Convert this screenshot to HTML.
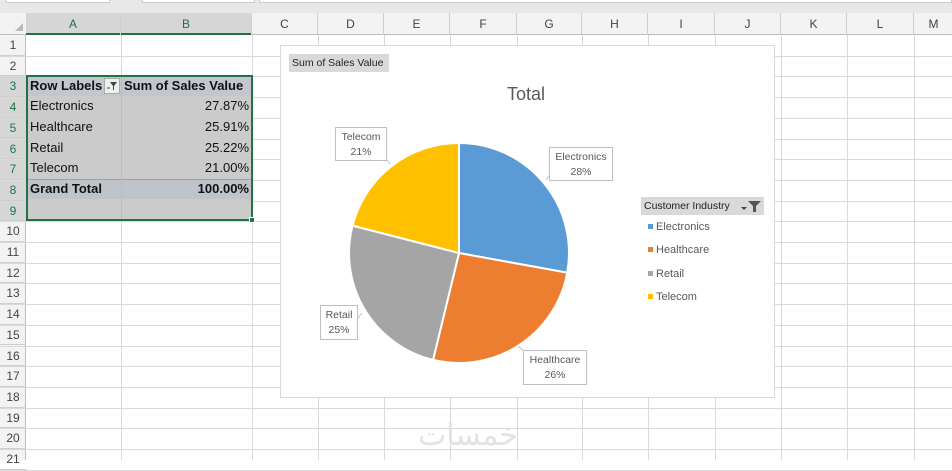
<!DOCTYPE html>
<html><head><style>
*{margin:0;padding:0;box-sizing:border-box}
body{width:952px;height:460px;overflow:hidden;background:#fff;font-family:"Liberation Sans",sans-serif;position:relative}
.a{position:absolute}
.hl{position:absolute;left:0;width:952px;height:1px;background:#d9d9d9}
.vl{position:absolute;top:35px;height:425px;width:1px;background:#d9d9d9}
.ch{position:absolute;top:13px;height:22px;font-size:12px;color:#444;text-align:center;line-height:22px;border-right:1px solid #cfcfcf}
.rh{position:absolute;left:0;width:26px;font-size:12px;color:#444;text-align:center;border-bottom:1px solid #cfcfcf}
.pt{position:absolute;font-size:13px;color:#111;line-height:20px}
.lbl{position:absolute;background:#fff;border:1px solid #bfbfbf;font-size:10.5px;color:#595959;text-align:center;line-height:15px;padding-top:2px}
.lg{position:absolute;left:648px;font-size:11px;color:#595959;line-height:14px}
.lg i{display:inline-block;width:5px;height:5px;margin-right:3px;vertical-align:1px}
</style></head><body>
<div class="a" style="left:0;top:0;width:952px;height:13px;background:#e8e8e8"></div>
<div class="a" style="left:5px;top:0;width:105px;height:3px;background:#fff;border:1px solid #ccc;border-top:0"></div>
<div class="a" style="left:142px;top:0;width:113px;height:3px;background:#fff;border:1px solid #ccc;border-top:0"></div>
<div class="a" style="left:259px;top:0;width:693px;height:3px;background:#fff;border:1px solid #ccc;border-top:0"></div>
<div class="a" style="left:0;top:13px;width:952px;height:22px;background:#f3f3f3;border-bottom:1px solid #bdbdbd"></div>
<div class="a" style="left:0;top:35px;width:26px;height:425px;background:#f3f3f3;border-right:1px solid #bdbdbd"></div>
<div class="a" style="left:26px;top:13px;width:226px;height:22px;background:#d6d6d6;border-bottom:2px solid #217346"></div>
<div class="a" style="left:0;top:76px;width:26px;height:145px;background:#d6d6d6"></div>
<svg class="a" style="left:14px;top:22px" width="10" height="10"><path d="M9 1L9 9L1 9Z" fill="#bbb"/></svg>

<div class="ch" style="left:26px;width:95px;color:#217346">A</div>
<div class="ch" style="left:121px;width:131px;color:#217346">B</div>
<div class="ch" style="left:252px;width:66px">C</div>
<div class="ch" style="left:318px;width:66px">D</div>
<div class="ch" style="left:384px;width:66px">E</div>
<div class="ch" style="left:450px;width:67px">F</div>
<div class="ch" style="left:517px;width:65px">G</div>
<div class="ch" style="left:582px;width:66px">H</div>
<div class="ch" style="left:648px;width:67px">I</div>
<div class="ch" style="left:715px;width:66px">J</div>
<div class="ch" style="left:781px;width:66px">K</div>
<div class="ch" style="left:847px;width:67px">L</div>
<div class="ch" style="left:914px;width:40px">M</div>

<div class="vl" style="left:121px"></div><div class="vl" style="left:252px"></div>
<div class="vl" style="left:318px"></div><div class="vl" style="left:384px"></div>
<div class="vl" style="left:450px"></div><div class="vl" style="left:517px"></div>
<div class="vl" style="left:582px"></div><div class="vl" style="left:648px"></div>
<div class="vl" style="left:715px"></div><div class="vl" style="left:781px"></div>
<div class="vl" style="left:847px"></div><div class="vl" style="left:914px"></div>

<div id="rows"></div>
<script>
var h='';for(var i=1;i<=21;i++){var t=35+(i-1)*20.7;h+='<div class="hl" style="top:'+(t+20.7).toFixed(1)+'px"></div><div class="rh" style="top:'+t.toFixed(1)+'px;height:20.7px;line-height:20.7px;'+((i>=3&&i<=9)?'color:#217346':'')+'">'+i+'</div>';}
document.getElementById('rows').innerHTML=h;
</script>

<!-- pivot table -->
<div class="a" style="left:27px;top:76px;width:225px;height:144px;background:#cbcbcb"></div>
<div class="a" style="left:27px;top:76px;width:225px;height:20px;background:#c3c7cd"></div>
<div class="a" style="left:27px;top:179px;width:225px;height:20px;background:#bfc4cb;border-top:1px solid #95a3b3"></div>
<div class="a" style="left:121px;top:76px;width:1px;height:144px;background:#bdbdbd"></div>
<div class="pt" style="left:30px;top:76px;font-weight:bold">Row Labels</div>
<div class="a" style="left:104px;top:78px;width:16px;height:16px;background:#eee;border:1px solid #aaa"></div>
<svg class="a" style="left:106px;top:80px" width="12" height="12"><path d="M4 2H11L8 6V10L7 10V6Z" fill="#444"/><path d="M1 8H4" stroke="#444"/></svg>
<div class="pt" style="left:124px;top:76px;font-weight:bold">Sum of Sales Value</div>
<div class="pt" style="left:30px;top:96px">Electronics</div><div class="pt" style="right:703px;top:96px">27.87%</div>
<div class="pt" style="left:30px;top:117px">Healthcare</div><div class="pt" style="right:703px;top:117px">25.91%</div>
<div class="pt" style="left:30px;top:138px">Retail</div><div class="pt" style="right:703px;top:138px">25.22%</div>
<div class="pt" style="left:30px;top:158px">Telecom</div><div class="pt" style="right:703px;top:158px">21.00%</div>
<div class="pt" style="left:30px;top:179px;font-weight:bold">Grand Total</div><div class="pt" style="right:703px;top:179px;font-weight:bold">100.00%</div>
<div class="a" style="left:26px;top:75px;width:227px;height:146px;border:2px solid #217346"></div>
<div class="a" style="left:249px;top:217px;width:6px;height:6px;background:#217346;border:1px solid #fff"></div>

<!-- chart -->
<div class="a" style="left:280px;top:45px;width:495px;height:353px;background:#fff;border:1px solid #d9d9d9"></div>
<div class="a" style="left:289px;top:54px;width:100px;height:18px;background:#d9d9d9;font-size:10.5px;line-height:18px;padding-left:3px;color:#222">Sum of Sales Value</div>
<div class="a" style="left:490px;top:84px;width:72px;text-align:center;font-size:18px;color:#595959">Total</div>
<svg class="a" style="left:0;top:0" width="952" height="460">
<path d="M459 253L459 143A110 110 0 0 1 567.2 272.7Z" fill="#5B9BD5" stroke="#fff" stroke-width="2"/>
<path d="M459 253L567.2 272.7A110 110 0 0 1 433.1 359.9Z" fill="#ED7D31" stroke="#fff" stroke-width="2"/>
<path d="M459 253L433.1 359.9A110 110 0 0 1 352.5 225.6Z" fill="#A5A5A5" stroke="#fff" stroke-width="2"/>
<path d="M459 253L352.5 225.6A110 110 0 0 1 459 143Z" fill="#FFC000" stroke="#fff" stroke-width="2"/>
<path d="M387 160L390 164M549 176L546 180M358 318L362 313M523 350L518 346" stroke="#bfbfbf"/>
</svg>
<div class="lbl" style="left:335px;top:127px;width:52px;height:34px">Telecom<br>21%</div>
<div class="lbl" style="left:549px;top:147px;width:64px;height:34px">Electronics<br>28%</div>
<div class="lbl" style="left:320px;top:305px;width:38px;height:35px">Retail<br>25%</div>
<div class="lbl" style="left:523px;top:350px;width:64px;height:35px">Healthcare<br>26%</div>

<div class="a" style="left:641px;top:197px;width:123px;height:18px;background:#d9d9d9;font-size:10.5px;line-height:18px;padding-left:3px;color:#222">Customer Industry</div>
<svg class="a" style="left:740px;top:199px" width="24" height="14"><path d="M1 8H7L4 11Z" fill="#444"/><path d="M8 2H21L16 7V13H13V7Z" fill="#555"/></svg>
<div class="lg" style="top:220px"><i style="background:#5B9BD5"></i>Electronics</div>
<div class="lg" style="top:243px"><i style="background:#ED7D31"></i>Healthcare</div>
<div class="lg" style="top:267px"><i style="background:#A5A5A5"></i>Retail</div>
<div class="lg" style="top:290px"><i style="background:#FFC000"></i>Telecom</div>

<div class="a" style="left:418px;top:418px;font-family:'DejaVu Sans',sans-serif;font-size:30px;color:#e3e3e3">خمسات</div>
</body></html>
